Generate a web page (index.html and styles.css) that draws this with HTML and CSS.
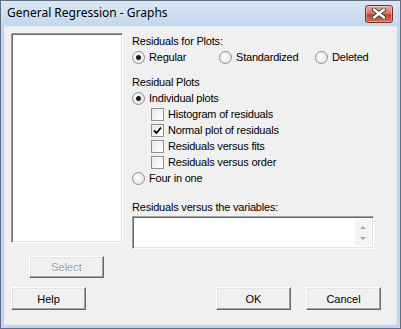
FILE: index.html
```html
<!DOCTYPE html>
<html lang="en">
<head>
  <meta charset="UTF-8" />
  <title>General Regression - Graphs</title>
  <link rel="stylesheet" href="styles.css">
</head>
<body>
  <div class="window">
    <div class="titlebar">
      <span class="title">General Regression - Graphs</span>
      <span class="close-btn">
        <svg width="14" height="11" viewBox="0 0 14 11">
          <path d="M2 1.5 L12 9.5 M12 1.5 L2 9.5" stroke="#3b3b3b" stroke-width="4.2" stroke-linecap="round" />
          <path d="M2 1.5 L12 9.5 M12 1.5 L2 9.5" stroke="#ffffff" stroke-width="2.4" stroke-linecap="round" />
        </svg>
      </span>
    </div>
    <div class="client">
      <div class="main">
        <div class="left-col">
          <div class="listbox"></div>
          <button class="btn select-btn" disabled>Select</button>
        </div>
        <div class="options">
          <div class="row">Residuals for Plots:</div>
          <div class="row radio-group">
            <label class="opt opt-regular"><span class="radio checked"></span>Regular</label>
            <label class="opt opt-std"><span class="radio"></span>Standardized</label>
            <label class="opt"><span class="radio"></span>Deleted</label>
          </div>
          <div class="row section">Residual Plots</div>
          <label class="row opt"><span class="radio checked"></span>Individual plots</label>
          <div class="checks">
            <label class="row opt"><span class="check"></span>Histogram of residuals</label>
            <label class="row opt"><span class="check checked">
              <svg width="9" height="9" viewBox="0 0 9 9"><path d="M1 4.5 L3.5 7 L8 1.5" fill="none" stroke="#000" stroke-width="1.8" /></svg>
            </span>Normal plot of residuals</label>
            <label class="row opt"><span class="check"></span>Residuals versus fits</label>
            <label class="row opt"><span class="check"></span>Residuals versus order</label>
          </div>
          <label class="row opt"><span class="radio"></span>Four in one</label>
          <div class="row section-2">Residuals versus the variables:</div>
          <div class="textbox">
            <div class="scrollbar">
              <span class="arrow up"></span>
              <span class="arrow down"></span>
            </div>
          </div>
        </div>
      </div>
      <div class="footer">
        <button class="btn">Help</button>
        <div class="footer-right">
          <button class="btn">OK</button>
          <button class="btn">Cancel</button>
        </div>
      </div>
    </div>
  </div>
</body>
</html>
```

FILE: styles.css
```css
* { box-sizing: border-box; }
body { margin: 0; background: #ffffff; }

.window {
  width: 401px; height: 329px;
  border: 1px solid #5f6e80;
  background: linear-gradient(#dbe7f5, #c3d6ed 26px, #c3d6ed);
  padding: 0 3px 3px 3px;
  display: flex; flex-direction: column;
}
.titlebar {
  height: 25px;
  display: flex; align-items: center; justify-content: space-between;
  padding: 0 4px 2px 3px;
}
.title {
  font-family: 'Noto Sans', sans-serif; font-size: 12px; color: #000;
}
.close-btn {
  width: 28px; height: 18px; margin-top: 2px;
  border: 1px solid #7a2e24; border-radius: 3px;
  background: linear-gradient(#e9a99c, #d47a67 45%, #c0422e 55%, #d0715a);
  box-shadow: inset 0 0 0 1px rgba(255,255,255,0.35);
  display: flex; align-items: center; justify-content: center;
}

.client {
  flex: 1;
  background: #f0f0f0;
  border: 1px solid #dfe8f3;
  padding: 6px 15px 0 6px;
  font-family: 'Liberation Sans', sans-serif; font-size: 11px;
  letter-spacing: -0.2px; color: #000;
}
.main { display: flex; gap: 9px; }
.left-col { width: 112px; display: flex; flex-direction: column; }
.listbox {
  height: 210px; background: #fff;
  border: 1px solid; border-color: #a0a0a0 #fff #fff #a0a0a0;
  box-shadow: inset 1px 1px 0 #696969, inset -1px -1px 0 #e3e3e3;
}
.btn {
  width: 75px; height: 23px; padding: 0;
  font-family: 'Liberation Sans', sans-serif; font-size: 11px; color: #000;
  background: #f0f0f0;
  border: 1px solid; border-color: #fff #696969 #696969 #fff;
  box-shadow: inset -1px -1px 0 #a0a0a0, inset 1px 1px 0 #e3e3e3;
}
.select-btn { height: 22px; margin: 13px 0 0 18px; color: #a0a0a0; text-shadow: 1px 1px 0 #fff; }

.options { flex: 1; }
.row { height: 16px; line-height: 16px; white-space: nowrap; }
.radio-group { display: flex; }
.opt { display: flex; align-items: center; }
.opt-regular { width: 87px; }
.opt-std { width: 96px; }
.section { margin-top: 9px; }
.section-2 { margin-top: 13px; }
.checks { padding-left: 19px; }

.radio {
  width: 13px; height: 13px; border-radius: 50%; margin-right: 4px;
  border: 1px solid #8e8f8f;
  background: radial-gradient(circle at 40% 40%, #ffffff, #dcdcdc);
  position: relative; flex: none;
}
.radio.checked::after {
  content: ""; position: absolute; left: 3px; top: 3px;
  width: 5px; height: 5px; border-radius: 50%;
  background: #1a1a1a;
}
.check {
  width: 13px; height: 13px; margin-right: 4px; flex: none;
  border: 1px solid #8e8f8f;
  background: linear-gradient(135deg, #e8e8e8, #ffffff);
  display: flex; align-items: center; justify-content: center;
}

.textbox {
  width: 242px; height: 33px; margin-top: 1px;
  background: #fff;
  border: 1px solid; border-color: #a0a0a0 #fff #fff #a0a0a0;
  box-shadow: inset 1px 1px 0 #696969, inset -1px -1px 0 #e3e3e3;
  display: flex; justify-content: flex-end; padding: 2px;
}
.scrollbar {
  width: 16px; background: #f4f4f4;
  display: flex; flex-direction: column; justify-content: space-between; align-items: center;
  padding: 7px 0 6px;
}
.arrow { width: 0; height: 0; border-left: 3px solid transparent; border-right: 3px solid transparent; }
.arrow.up { border-bottom: 3px solid #a8a8a8; }
.arrow.down { border-top: 3px solid #a8a8a8; }

.footer { display: flex; justify-content: space-between; margin-top: 9px; }
.footer-right { display: flex; gap: 15px; }
```
